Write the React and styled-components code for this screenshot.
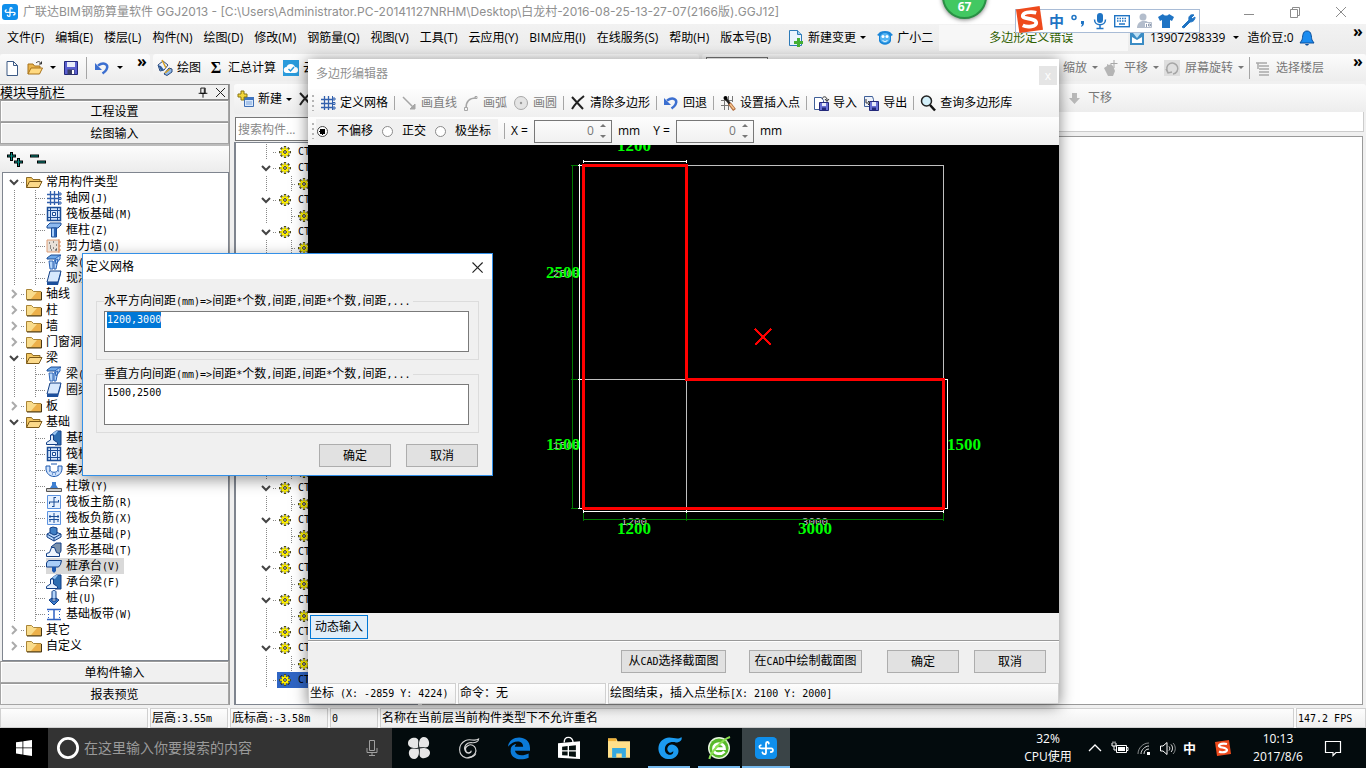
import React, { useEffect, useRef } from 'react'
import styled, { createGlobalStyle, css } from 'styled-components'

const GlobalStyle = createGlobalStyle`
  * {
    box-sizing: border-box;
  }

  body {
    margin: 0;
    overflow: hidden;
    color: #000;
    background: #f0f0f0;
    font: 12px/16px 'Open Sans', 'Noto Sans CJK SC', sans-serif;
  }

  button,
  input,
  select,
  textarea {
    margin: 0;
    padding: 0;
    color: inherit;
    font: inherit;
    border-radius: 0;
  }
`

/* ---------- text ---------- */

const Narrow = styled.span`
  font-family: 'DejaVu Sans Mono', monospace;
  font-size: 10px;
  white-space: pre;
`

// Chinese at 12px, everything else at half that width
function Mixed({ children }) {
  return children
    .split(/([\x20-\x7e]+)/)
    .filter(Boolean)
    .map((part, i) =>
      /^[\x20-\x7e]/.test(part) ? <Narrow key={i}>{part}</Narrow> : part
    )
}

/* ---------- icons ---------- */

const Svg = styled.svg`
  display: block;
  flex: none;
  overflow: visible;
`

const shapes = {
  file: (
    <path d="M3 1.500h6.500l4 4v10h-10.500zM9.500 1.500v4h4" fill="#fff" stroke="#3d5a85" />
  ),
  open: (
    <g>
      <path d="M1 14V4h5l1.500 2H13v3" fill="#e9b44c" stroke="#a8721a" />
      <path d="M1 14l3-6h11.500l-3 6z" fill="#ffd980" stroke="#a8721a" />
      <path d="M9 3c2-2 4-2 5 1M12 4h2.500V1.500" fill="none" stroke="#333" />
    </g>
  ),
  save: (
    <g>
      <path d="M1.500 1.500h13v13h-13z" fill="#5a5fd0" stroke="#23287a" />
      <path d="M4 2h8v5H4z" fill="#e8ecfa" />
      <path d="M4.500 9.500h7v5h-7z" fill="#3a3f66" />
      <path d="M9 10h2v4H9z" fill="#fff" />
    </g>
  ),
  undo: (
    <g fill="none" stroke="#3c6fd0" strokeWidth="2.500">
      <path d="M4 5.500c6-4 11-1 8.500 4-1 2-2.500 3-4 4" />
      <path d="M1 3v7h7z" fill="#3c6fd0" stroke="none" />
    </g>
  ),
  bucket: (
    <g>
      <path d="M1 5l5-4 5 4-4 5-4 1z" fill="#eef3fb" stroke="#2c4a7c" />
      <path d="M1 5l3 6 3-1-3-4z" fill="#2c5d9c" />
      <path d="M7 14l5-6 3 1v3l-5 3.500z" fill="#8fb9ea" stroke="#2c4a7c" />
      <path d="M5 0l4 8M8 13l5-4" stroke="#d6a021" strokeWidth="1.500" />
    </g>
  ),
  cloud: (
    <g>
      <path d="M0 0h16v16H0z" fill="#2a9bdc" />
      <path d="M4 13a3 3 0 0 1-.5-6 4.500 4.500 0 0 1 8.500 0 3 3 0 0 1 0 6z" fill="#fff" />
      <path d="M5.500 9l2 2 3.500-4" fill="none" stroke="#2a9bdc" strokeWidth="1.500" />
    </g>
  ),
  addTable: (
    <g>
      <path d="M6.500 6.500h9v9h-9z" fill="#d8e8fb" stroke="#3f6fb5" />
      <path d="M6 6h10v3H6z" fill="#3f74c0" />
      <path d="M8 11h6M8 13h6" stroke="#7ba1d8" />
      <path d="M3 0h3v3h3v3H6v3H3V6H0V3h3z" fill="#f2d53a" stroke="#8a7610" />
    </g>
  ),
  cross: (
    <path d="M2 2l11 12M14 1C9 5 5 9 2 14" fill="none" stroke="#222" strokeWidth="2" />
  ),
  grid: (
    <g>
      <path d="M4.500 1v14M8.500 1v14M1 4.500h12M1 8.500h12M1 12.500h12" fill="none" stroke="#3260ad" strokeWidth="1.300" />
      <path d="M12.500 1v14" stroke="#3260ad" />
      <path d="M13 3h2v2h-2zM13 7.500h2v2h-2zM13 12h2v2h-2z" fill="#fff" stroke="#3260ad" />
    </g>
  ),
  line: (
    <g fill="none" stroke="#a6a6a6">
      <path d="M2 2l11 11" strokeWidth="1.500" />
      <path d="M14 9v5H9z" fill="#a6a6a6" />
    </g>
  ),
  arc: (
    <g fill="none" stroke="#a6a6a6" strokeWidth="1.500">
      <path d="M3 13C3 6 7 3 13 3" />
      <path d="M1.500 12.500h3v3h-3zM12 1.500h2v2h-2z" strokeWidth="1" />
    </g>
  ),
  circle: (
    <g>
      <circle cx="8" cy="8" r="6.500" fill="#e4e4e4" stroke="#a8a8a8" />
      <circle cx="8" cy="8" r="1.200" fill="#999" />
    </g>
  ),
  wand: (
    <g>
      <path d="M4.500 2v13M8.500 1v14M1 5.500h12M1 10.500h10M12.500 1v6" fill="none" stroke="#777" />
      <path d="M6 4l4 5" stroke="#222" strokeWidth="2.500" />
      <path d="M9.500 8.500l5 6.500" stroke="#b06a3c" strokeWidth="3.500" />
      <path d="M10 9l4 5" stroke="#f4c48c" strokeWidth="1.500" />
      <circle cx="5.500" cy="3" r="2" />
    </g>
  ),
  importFile: (
    <g>
      <path d="M1.500 2.500h7l2 3v9h-9z" fill="#fff" stroke="#3f5f98" />
      <path d="M6.500 7.500h9v8h-9z" fill="#6a72d4" stroke="#23287a" />
      <path d="M9 8h4v3H9z" fill="#e8ecfa" />
      <path d="M9 12.500h4v3H9z" fill="#23287a" />
      <path d="M9 4c1-3 4-3 5 0v2M12 4l2 2.500 2-2.500" fill="none" stroke="#333" />
    </g>
  ),
  exportFile: (
    <g>
      <path d="M1.500 1.500h8l1 3v7h-9z" fill="#eef2fa" stroke="#3f5f98" />
      <path d="M6.500 6.500h9v9h-9z" fill="#6a72d4" stroke="#23287a" />
      <path d="M9 7h4v4H9z" fill="#e8ecfa" />
      <path d="M9 12.500h4v3H9z" fill="#23287a" />
      <path d="M3 4v4h4M5 6l2 2-2 2" fill="none" stroke="#333" />
    </g>
  ),
  search: (
    <g>
      <circle cx="6.500" cy="6" r="5" fill="#d4f0fa" stroke="#222" strokeWidth="1.500" />
      <path d="M10 10l5 5.500" stroke="#111" strokeWidth="2.500" />
    </g>
  ),
  newChange: (
    <g>
      <path d="M1.500.5h8l4 4v11h-12z" fill="#eaf4fd" stroke="#2c7ab8" />
      <path d="M9.500.5v4h4" fill="#9ccbee" stroke="#2c7ab8" />
      <path d="M9 8h3v3h3v3h-3v3H9v-3H6v-3h3z" fill="#45b035" />
    </g>
  ),
  mascot: (
    <g>
      <path d="M0 5l3-3c3-1.500 7-1.500 10 0l3 3-2 1v5c-2 5-10 5-12 0V6z" fill="#1b86d8" />
      <circle cx="8" cy="8" r="5" fill="#55b5f3" />
      <circle cx="6" cy="6.500" r="1.500" fill="#fff" />
      <circle cx="10" cy="6.500" r="1.500" fill="#fff" />
      <path d="M5.500 10c1 2 4 2 5 0" stroke="#fff" fill="none" />
    </g>
  ),
  account: (
    <g>
      <path d="M1 1h14v14H1z" fill="#3b8cc4" />
      <path d="M3 7l5 3 5-3v6H3z" fill="#fff" />
      <path d="M4 3h8l-4 5z" fill="#bfe0f4" />
    </g>
  ),
  bell: (
    <g>
      <path d="M8 1c5 0 4 6 5 9l2 3H1l2-3c1-3 0-9 5-9z" fill="#1b8cf0" stroke="#0b4f9c" />
      <path d="M6 14c1 2 3 2 4 0z" fill="#0b4f9c" />
    </g>
  ),
  hand: (
    <g>
      <path d="M1 8l3-2v-2l2 1 2-1 2 2 2 5-2 5H5z" fill="#b5b5b5" />
      <path d="M11 0v8M7.500 3.500h7" stroke="#a8a8a8" />
    </g>
  ),
  rotate: (
    <g>
      <path d="M0 0h16v16H0z" fill="#dedede" />
      <path d="M4 12a5.500 5.500 0 1 1 5 2M2 9l2 4 4-1" fill="none" stroke="#a6a6a6" strokeWidth="1.500" />
    </g>
  ),
  floors: (
    <path d="M1 3h11M4 6h10M4 9h10M4 12h10M4 15h10M3 3v6" fill="none" stroke="#a9a9a9" strokeWidth="1.500" />
  ),
  down: <path d="M5 3h5v5h3l-5.500 6L2 8h3z" fill="#b9b9b9" />,
  logo: (
    <g>
      <rect width="16" height="16" rx="3" fill="#0f8fec" />
      <path
        d="M8 8V5c0-1.800 2-1.800 2-.2M8 8v3.200c0 1.600-2.300 1.600-2.600 0M8 8.300H4.600c-1.800 0-1.800-2-.4-2.300M8 8.300h3.800c1.700 0 1.700 2.600-.3 2.600"
        fill="none"
        stroke="#fff"
        strokeWidth="1.300"
        strokeLinecap="round"
      />
    </g>
  ),
  pin: (
    <path d="M5.500 3.500h5v6h-5zM3 9.500h10M8 9.500v5M9.500 4v5" fill="none" stroke="#000" />
  ),
  close: <path d="M4 4l9 9M13 4l-9 9" fill="none" stroke="#222" />,
  folder: (
    <g>
      <path d="M.5 13.500V3.500h5l2 2h7.500v8z" fill="#f9dc8c" stroke="#a98538" />
      <path d="M11 6h3.500v7H5z" fill="#ecb04a" />
      <path d="M1 14h14.500V6" fill="none" stroke="#4a3712" />
    </g>
  ),
  folderOpen: (
    <g>
      <path d="M.5 13.500V3.500h5l1.500 2h7v2" fill="#f3c763" stroke="#8d6a25" />
      <path d="M.5 13.500l3-6H16l-3 6z" fill="#fbd98a" stroke="#7a5818" />
    </g>
  ),
  raft: (
    <g fill="none" stroke="#1b4d96">
      <path d="M1.500 1.500h13v13h-13z" fill="#d6e7fc" strokeWidth="1.500" />
      <path d="M4.500 2v12M11.500 2v12M2 4.500h12M2 11.500h12" />
      <path d="M6.500 6.500h3v3h-3z" fill="#fff" />
    </g>
  ),
  column: (
    <g>
      <path d="M1 4l3-3h11v2l-3 3H1z" fill="#8db9ef" stroke="#1b4d96" />
      <path d="M5.500 6h5v9h-5z" fill="#a9cdf7" stroke="#1b4d96" />
      <path d="M8 6h2v9H8z" fill="#2b63b5" />
    </g>
  ),
  wall: (
    <g>
      <path d="M1 2h12v12H1z" fill="#e9e1d9" stroke="#e0a078" />
      <path d="M3 5h1M7 4h1M10 7h1M4 8h1M7 10h1M10 11h1M5 12h1M4 10h1M9 12h2" stroke="#333" />
      <path d="M13 1v14M13 4h2M13 8h2M13 12h2" stroke="#d88a5c" />
    </g>
  ),
  beam: (
    <g>
      <path d="M1 4l4-3h10l-4 4H1z" fill="#6ea8e8" stroke="#1b4d96" />
      <path d="M9 5l5-4v4l-4 5zM3 7h4v8H4zM8 7l4-2-2 10H8z" fill="#b6d6fa" stroke="#2b63b5" />
    </g>
  ),
  slab: (
    <g>
      <path d="M4 1h11l-3 11H1z" fill="#d7e8fd" stroke="#123f85" />
      <path d="M1 12h11l3-11v3l-3 11H1z" fill="#1c4f9c" />
    </g>
  ),
  beamBase: (
    <g>
      <path d="M5 5l5-4h5v14H9z" fill="#2d6db0" stroke="#123f85" />
      <path d="M6 4l4-3h2L9 5z" fill="#9cc8f4" />
      <path d="M.5 14.500v-2l4-2.500V5h3v5l4 2.500v2z" fill="#e3effd" stroke="#123f85" />
    </g>
  ),
  strip: (
    <g>
      <path d="M5 5l5-4h5v8l-3 5z" fill="#7c93ad" stroke="#123f85" />
      <path d="M.5 14.500v-3l3-1 2-5h3l2 5 3 1v3z" fill="#eef5fe" stroke="#123f85" />
    </g>
  ),
  sump: (
    <g>
      <path d="M0 4h4v4c1 3 7 3 8 0V4h4v3c-1 10-15 10-16 0z" fill="#cfe2fb" stroke="#1c58b0" />
      <path d="M3 9h1M6 12h1M9 12h1M12 9h1M5 2h6" stroke="#1c58b0" />
    </g>
  ),
  pier: (
    <g>
      <path d="M.5 10.500h15v3H.5z" fill="#cfcfcf" stroke="#555" />
      <path d="M4 10l2-3V4h4v3l2 3z" fill="#3e7fd0" />
    </g>
  ),
  barMain: (
    <g fill="none" stroke="#1b4d96">
      <path d="M1.500 1.500h13v13h-13z" fill="#e6f1ff" stroke="#5c93e0" />
      <path d="M8 3v10M3 8h10M3.500 8v2M12.500 8V6M8 3.500h2M8 12.500H6" />
    </g>
  ),
  barTop: (
    <g fill="none" stroke="#1b4d96">
      <path d="M1.500 1.500h13v13h-13z" fill="#e6f1ff" stroke="#5c93e0" />
      <path d="M3 6.500h10M3 9.500h10M8 3v10M4 5v3M12 5v3M4 9v3M12 9v3" />
    </g>
  ),
  isolated: (
    <g>
      <path d="M1 8l6-3 8 3v3l-7 4-7-4z" fill="#b6d6fa" stroke="#123f85" />
      <path d="M4 2l3-1 4 1v6L8 9 4 7z" fill="#3f7fc4" stroke="#123f85" />
      <path d="M1 8l7 4 7-4M8 12v3" fill="none" stroke="#123f85" />
    </g>
  ),
  cap: (
    <g>
      <path d="M.5 5l2-2.500h13l-1 4-2 2.500H.5z" fill="#a9cdf7" stroke="#123f85" />
      <path d="M6 9h4v4l-2 2-2-2z" fill="#1c58b0" />
    </g>
  ),
  pile: (
    <g fill="#3e7fd0" stroke="#123f85">
      <path d="M6 2c0-2 4-2 4 0v7H6z" fill="#b6d6fa" />
      <path d="M3 10l3-2v3h4V8l3 2-3 3-2 2-2-2z" />
    </g>
  ),
  band: (
    <g fill="none" stroke="#2f62c4">
      <path d="M1 3.500h14M1 13.500h14M8 4v9" strokeWidth="1.500" />
      <path d="M2.500 5v8M13.500 5v8" strokeDasharray="1 2" />
    </g>
  ),
  gear: (
    <g>
      <path d="M8 0v16M0 8h16M2.500 2.500l11 11M13.500 2.500l-11 11" stroke="#222" strokeWidth="3" />
      <path d="M8 1v14M1 8h14M3.500 3.500l9 9M12.500 3.500l-9 9" stroke="#fff200" strokeWidth="2" />
      <circle cx="8" cy="8" r="4.500" fill="#fff200" />
      <circle cx="8" cy="8" r="1.800" fill="#fff" stroke="#222" strokeWidth="1.300" />
    </g>
  ),
  start: (
    <path d="M0 2.300l6.500-.9v6.100H0zM7.300 1.300L16 0v7.500H7.300zM0 8.300h6.500v6.100L0 13.500zM7.300 8.300H16V16l-8.700-1.300z" fill="#fff" />
  ),
  cortana: <circle cx="8" cy="8" r="7" fill="none" stroke="#fff" strokeWidth="2" />,
  mic: (
    <path d="M5.500.5h5v10h-5zM3 8v4.500h10V8M8 12.500V15.500M5 15.500h6" fill="none" stroke="#a0a0a0" />
  ),
  fan: (
    <g fill="#e6e6e6">
      <path d="M7.600 7.600C5 8.500 0 8 0 4.500 0 1 5-.5 7 1.500c1.200 1.500 0 4 .6 6.100z" />
      <path d="M8.400 7.600C7.500 5 8 0 11.500 0 15 0 16.500 5 14.500 7c-1.500 1.200-4 0-6.100.6z" />
      <path d="M8.400 8.400C11 7.500 16 8 16 11.500 16 15 11 16.500 9 14.500c-1.200-1.500 0-4-.6-6.100z" />
      <path d="M7.600 8.400C8.500 11 8 16 4.500 16 1 16-.5 11 1.500 9c1.500-1.200 4 0 6.100-.6z" />
    </g>
  ),
  swirl: (
    <g fill="none" stroke="#d5d5d5" strokeWidth=".8">
      <path d="M15 1.500c-3 2-6-.5-9.500 1-6 3-5.500 11 0 12.500 5 1 9.500-4 6.500-8-3-3-8 0-6 3.500 1 1.500 3.500 1 3.500-.5 .5 2-3 2.500-4 .5-2-3 .5-6.500 4-6.500 3 .5 5.500-.5 5.500-2.500z" />
      <path d="M13 12c-1 2-3 3-6 3" />
    </g>
  ),
  edge: (
    <path d="M0 7C1-2 16-2 16 8v2H5c1 4 6 4 10 2v3C8 18 1 15 2 9c0-3 3-4 4-4-1 1-1 2-1 2h6C11 2 4 2 0 7z" fill="#0b7ad8" />
  ),
  store: (
    <g>
      <path d="M0 4.500L16 3v13l-16-1z" fill="#fff" />
      <path d="M4.500 4c0-5 6-5 6.500 0" fill="none" stroke="#fff" />
      <path d="M3 7l4-.4v3H3zM8 6.500l5-.5v3.600H8zM3 10.500h4v3l-4-.3zM8 10.500h5v4L8 14z" fill="#05100f" />
    </g>
  ),
  explorer: (
    <g>
      <path d="M0 1h6l1 2h9v12H0z" fill="#ffe08a" />
      <path d="M0 1h6v2H0z" fill="#f0b23a" />
      <path d="M3 8h10v7h-3v-3H6v3H3z" fill="#35a9e0" />
    </g>
  ),
  glodon: (
    <path d="M17 0c-3 3-7-1-12 1-7 3-6 14 2 15 7 1 11-7 5-10-4-2-7 3-4 5 1 1 3 0 3-1 1 4-6 4-6-1 0-5 5-6 8-5 3 0 5-2 4-4z" fill="#1c9bf0" />
  ),
  greenBrowser: (
    <g>
      <circle cx="8" cy="8" r="8" fill="#e9f7e0" />
      <circle cx="8" cy="8" r="7" fill="#57b82c" />
      <path d="M4 8.500h8c0-5-8-5-8 0s6 4 8 2" fill="none" stroke="#fff" strokeWidth="2" />
      <path d="M1 16C2 11 10 2 16 0" fill="none" stroke="#8be052" strokeWidth="1.500" />
    </g>
  ),
  up: <path d="M2 11l6-6 6 6" fill="none" stroke="#fff" strokeWidth="1.300" />,
  battery: (
    <g>
      <path d="M5.500 5.500h10v7h-10zM15.500 7.500h1.500v3h-1.500" fill="none" stroke="#fff" />
      <path d="M7 7h7v4H7z" fill="#fff" />
      <path d="M1 3v3h4V3M3 6v4h2M2 1.500v2M4 1.500v2" fill="none" stroke="#fff" />
    </g>
  ),
  wifi: (
    <g fill="none" stroke="#ddd">
      <path d="M3 14C3 8 8 3 14 3" opacity=".6" />
      <path d="M6 14c0-4 4-8 8-8M9 14c0-3 2-5 5-5" />
      <path d="M12 12h3v3h-3z" fill="#fff" stroke="none" />
    </g>
  ),
  volume: (
    <g fill="none" stroke="#fff">
      <path d="M1.500 6v5h2.500l4 3.500V2.500L4 6z" />
      <path d="M10 6.500c1 1 1 3 0 4M12 4.500c2 2 2 5.500 0 7.500" />
      <path d="M14 3c3 3 3 8 0 11" opacity=".5" />
    </g>
  ),
  message: (
    <path d="M.5 1.500h15v11H11L8 15.500V12.500H.5z" fill="none" stroke="#fff" strokeWidth="1.200" />
  ),
  micBlue: (
    <g>
      <rect x="5" y="0" width="6" height="10" rx="3" fill="#1f74c4" />
      <path d="M2.500 6.500c0 7 11 7 11 0M8 12v3M4.500 15.500h7" fill="none" stroke="#1f74c4" strokeWidth="1.500" />
    </g>
  ),
  keyboard: (
    <g>
      <rect x=".7" y="2.700" width="14.600" height="11" fill="#fff" stroke="#1f74c4" strokeWidth="1.400" />
      <path d="M3 5.500h10M3 8h10" stroke="#1f74c4" strokeWidth="1.500" strokeDasharray="1.500 1" />
      <path d="M5 11h6" stroke="#1f74c4" strokeWidth="1.500" />
    </g>
  ),
  user: (
    <g fill="#b3bdcc">
      <circle cx="7" cy="4" r="3.500" />
      <path d="M1 15c0-9 12-9 12-3v3z" />
      <path d="M8.500 9.500h7v5h-7z" fill="#fff" stroke="#b3bdcc" />
      <path d="M10.500 11v3M12.500 11h2v2h-2z" fill="none" stroke="#8e9bb0" />
    </g>
  ),
  shirt: <path d="M5 1c1 2 5 2 6 0l5 3-2 4-2-1v8H4V7L2 8 0 4z" fill="#1f74c4" />,
  wrench: (
    <path d="M2 14l7-7c-1-4 2-6 5-5l-3 3 1 1 3-2c0 4-3 5-5 5l-6 6z" fill="#1f74c4" stroke="#1f74c4" />
  ),
  comma: (
    <g fill="none" stroke="#1f74c4">
      <circle cx="4" cy="4.500" r="2" strokeWidth="1.500" />
      <path d="M11 8h3v2c0 2-1 3-3 4l1-3h-1z" fill="#1f74c4" stroke="none" />
    </g>
  ),
  sogou: (
    <g>
      <path d="M0 2l14-2 2 14-14 2z" fill="#ee4a1c" />
      <path d="M12 4C8 3 4 4 4 6s8 1 8 4c0 2-5 3-8 1.500" fill="none" stroke="#fff" strokeWidth="2.200" />
    </g>
  ),
  minimize: <path d="M3 10.500h10" stroke="#8c8c8c" />,
  restore: (
    <path d="M3.500 5.500h7v8h-7zM5.500 5.500v-2h7v8h-2" fill="none" stroke="#8c8c8c" />
  ),
  closeWindow: <path d="M3 3l10 10M13 3L3 13" stroke="#8c8c8c" />,
}

function Icon({ name, size = 16 }) {
  return (
    <Svg width={size} height={size} viewBox="0 0 16 16" aria-hidden="true">
      {shapes[name]}
    </Svg>
  )
}

const Caret = styled.span`
  flex: none;
  border: 3px solid transparent;
  border-top-color: ${(props) => (props.$dim ? '#777' : '#000')};
  border-bottom-width: 0;
`

const Overflow = styled.button`
  align-self: flex-start;
  width: 12px;
  margin-left: auto;
  border: 0;
  background: none;
  color: #000;
  font-size: 16px;
  font-weight: 700;
  line-height: 14px;
`

/* ---------- main window ---------- */

const Screen = styled.div`
  position: relative;
  display: flex;
  flex-direction: column;
  height: 100vh;
  overflow: hidden;
`

const TitleBar = styled.header`
  display: flex;
  align-items: center;
  height: 24px;
  padding: 0 17px 0 2px;
  gap: 5px;
  background: #fff;
  color: #8f8f8f;
  font-family: Inter, 'Noto Sans CJK SC', sans-serif;
  white-space: nowrap;
`

const WindowButtons = styled.div`
  display: flex;
  gap: 30px;
  margin-left: auto;
`

const PlainButton = styled.button`
  display: flex;
  align-items: center;
  justify-content: center;
  border: 0;
  background: none;
`

const MenuBar = styled.nav`
  display: flex;
  align-items: center;
  height: 30px;
  padding: 0 0 3px 2px;
  background: linear-gradient(#f2f2f2, #ebebeb);
  white-space: nowrap;
`

const Menus = styled.div`
  display: flex;
  margin-right: 6px;
`

const MenuItem = styled.button`
  display: flex;
  align-items: center;
  gap: 4px;
  padding: 0 6px 0 5px;
  border: 0;
  background: none;
`

const Notice = styled.div`
  flex: 1;
  display: flex;
  align-items: center;
  height: 26px;
  padding-left: 50px;
  background: #f7f7f7;
  color: #2f6000;
`

const Account = styled.div`
  display: flex;
  align-items: center;
  align-self: stretch;
  gap: 4px;
  width: 238px;
  padding-right: 2px;

  ${Caret} {
    margin: 0 4px;
  }

  svg {
    margin: 0 1px;
  }
`

const ToolRow = styled.div`
  display: flex;
  height: 30px;
  gap: 3px;
  white-space: nowrap;
`

const ToolGroup = styled.div`
  display: flex;
  align-items: center;
  flex: ${(props) => (props.$width ? `0 0 ${props.$width}px` : 1)};
  height: 27px;
  padding: 0 2px 0 4px;
  gap: ${(props) => props.$gap || 8}px;
  border-radius: 3px;
  background: linear-gradient(#fcfcfc, #ededed);
  color: ${(props) => (props.$dim ? '#777' : '#000')};
`

const Tool = styled.button`
  display: flex;
  align-items: center;
  gap: 4px;
  border: 0;
  background: none;
  white-space: nowrap;

  &:disabled {
    color: #7d7d7d;
  }
`

const Sigma = styled.b`
  width: 16px;
  font: 700 16px/16px 'Liberation Serif', serif;
`

const Separator = styled.span`
  flex: none;
  width: 1px;
  height: ${(props) => props.$height || 22}px;
  background: #a5a5a5;
`

const FloorSelect = styled.select`
  align-self: flex-start;
  width: 62px;
  height: 22px;
  margin-top: 3px;
  border: 1px solid #777;
  background: #fff;
`

const RightTools = styled.div`
  display: flex;
  align-items: center;
  align-self: stretch;
  gap: 5px;
  margin-left: auto;
  padding-right: ${(props) => props.$inset || 0}px;

  ${Overflow} {
    margin-left: 23px;
  }
`

const Work = styled.main`
  flex: 1;
  display: flex;
  min-height: 0;
  gap: 4px;
  padding-bottom: 3px;
`

const Sidebar = styled.aside`
  display: flex;
  flex-direction: column;
  width: 230px;
  border-right: 1px solid #999;
`

const PanelHead = styled.div`
  display: flex;
  align-items: center;
  height: 16px;
  gap: 2px;
  border: 1px solid #888;
  border-left: 0;
  font-size: 13px;

  span {
    flex: 1;
  }
`

const SectionButton = styled.button`
  height: 22px;
  padding-top: 2px;
  border: 1px solid #a5a5a5;
  border-top-color: #999;
  background: #f0f0f0;
  box-shadow: inset 1px 1px #fff;
`

const TreeTools = styled.div`
  display: flex;
  align-items: center;
  height: 28px;
  padding-left: 7px;
  border-top: 2px solid #bbb;
  background: linear-gradient(#fcfcfc, #ececec);
`

const Tree = styled.ul`
  flex: 1;
  min-height: 0;
  margin: 0;
  padding: ${(props) => (props.$narrow ? '1px 0 0 23px' : '1px 0 0 4px')};
  overflow: hidden;
  border: 1px solid #7f858f;
  border-width: ${(props) => (props.$narrow ? '1px 1px 1px 2px' : '1px')};
  background: #fff;
  list-style: none;
  margin-left: ${(props) => (props.$narrow ? 0 : '2px')};
`

const dotsDown = css`
  background-image: repeating-linear-gradient(#888 0 1px, transparent 1px 2px);
  background-size: 1px 100%;
  background-repeat: no-repeat;
`

const dotsAcross = css`
  content: '';
  height: 1px;
  background: repeating-linear-gradient(90deg, #888 0 1px, transparent 1px 2px);
`

const TreeRow = styled.li`
  display: flex;
  align-items: center;
  height: 16px;
  white-space: nowrap;

  &::before {
    ${dotsAcross}
    order: 1;
    width: ${(props) => (props.$depth ? 10 : 4)}px;
  }
`

const Stem = styled.span`
  flex: none;
  width: ${(props) => props.$width}px;
  height: 16px;
  ${(props) => props.$line && dotsDown}
  background-position: 7px 0;
`

const Toggle = styled.button`
  flex: none;
  display: flex;
  width: 14px;
  padding: 0 1px;
  border: 0;
  background: none;
`

const TreeLabel = styled.span`
  order: 2;
  display: flex;
  align-items: center;
  gap: 4px;
  height: 16px;
  padding-right: 4px;
  padding-left: ${(props) => props.$inset || 0}px;
  background: ${(props) => props.$background || 'none'};

  svg {
    margin-right: ${(props) => props.$iconGap || 0}px;
  }
`

function Chevron({ open }) {
  return (
    <Svg width="12" height="12" viewBox="0 0 12 12" fill="none" strokeWidth="2">
      <path
        d={open ? 'M2 4l4 4 4-4' : 'M4 2l4 4-4 4'}
        stroke={open ? '#444' : '#aaa'}
      />
    </Svg>
  )
}

const modules = [
  ['folderOpen', '常用构件类型', 0, true],
  ['grid', '轴网(J)', 1],
  ['raft', '筏板基础(M)', 1],
  ['column', '框柱(Z)', 1],
  ['wall', '剪力墙(Q)', 1],
  ['beam', '梁(L)', 1],
  ['slab', '现浇板(B)', 1],
  ['folder', '轴线', 0],
  ['folder', '柱', 0],
  ['folder', '墙', 0],
  ['folder', '门窗洞', 0],
  ['folderOpen', '梁', 0, true],
  ['beam', '梁(L)', 1],
  ['slab', '圈梁(E)', 1],
  ['folder', '板', 0],
  ['folderOpen', '基础', 0, true],
  ['beamBase', '基础梁(F)', 1],
  ['raft', '筏板基础(M)', 1],
  ['sump', '集水坑(K)', 1],
  ['pier', '柱墩(Y)', 1],
  ['barMain', '筏板主筋(R)', 1],
  ['barTop', '筏板负筋(X)', 1],
  ['isolated', '独立基础(P)', 1],
  ['strip', '条形基础(T)', 1],
  ['cap', '桩承台(V)', 1],
  ['beamBase', '承台梁(F)', 1],
  ['pile', '桩(U)', 1],
  ['band', '基础板带(W)', 1],
  ['folder', '其它', 0],
  ['folder', '自定义', 0],
]

function ModuleTree() {
  return (
    <Tree>
      {modules.map(([icon, label, depth, open], i) => (
        <TreeRow key={i} $depth={depth}>
          {depth ? (
            <>
              <Stem $width={21} $line />
              <Stem $width={8} $line />
            </>
          ) : (
            <Toggle aria-label={label}>
              <Chevron open={open} />
            </Toggle>
          )}
          <TreeLabel
            $inset={depth ? 0 : 1}
            $background={label === '桩承台(V)' && '#d9d9d9'}
          >
            <Icon name={icon} />
            <span>
              <Mixed>{label}</Mixed>
            </span>
          </TreeLabel>
        </TreeRow>
      ))}
    </Tree>
  )
}

// p: parent with one child, l: single item
const componentRows = 'lpppppppppppplpplpl'.split('').flatMap((kind, i, all) => {
  const last = i === all.length - 1
  return kind === 'p'
    ? [{ open: true }, { child: true }]
    : [{ selected: last }]
})

const Column = styled.section`
  display: flex;
  flex-direction: column;
  width: ${(props) => (props.$width ? `${props.$width}px` : 'auto')};
  flex: ${(props) => (props.$width ? 'none' : 1)};
  min-width: 0;
`

const SearchBox = styled.input`
  height: 24px;
  margin: 3px 0 1px 1px;
  padding: 0 2px;
  border: 1px solid #777;
  background: #fff;

  &::placeholder {
    color: #888;
  }
`

const DrawingArea = styled.div`
  flex: 1;
  margin: 4px 3px 0 0;
  border: 1px solid #999;
  background: #fff;
`

const TabStrip = styled.div`
  height: 20px;
  margin-right: 2px;
  border: 1px solid #ccc;
  border-top: 0;
  background: #fff;
`

const StatusBar = styled.footer`
  display: flex;
  gap: 2px;
  height: 20px;
  background: #fbfbfb;
`

const StatusCell = styled.div`
  flex: ${(props) => (props.$width ? `0 0 ${props.$width}px` : 1)};
  padding: 0 1px;
  border: 1px solid #d0d0d0;
  background: linear-gradient(#fdfdfd, #efefef);
  line-height: 18px;
  white-space: nowrap;
`

/* ---------- taskbar ---------- */

const Taskbar = styled.footer`
  display: flex;
  height: 40px;
  background: #030b0d;
  color: #fff;
`

const TaskButton = styled.button`
  display: flex;
  align-items: center;
  justify-content: center;
  width: 48px;
  border: 0;
  border-bottom: 2px solid ${(props) => (props.$running ? '#76b9ed' : 'transparent')};
  border-top: 2px solid transparent;
  background: ${(props) => props.$background || 'none'};
`

const TaskSearch = styled.label`
  display: flex;
  align-items: center;
  gap: 5px;
  width: 344px;
  padding: 0 12px 0 9px;
  background: #333;

  input {
    flex: 1;
    min-width: 0;
    border: 0;
    outline: 0;
    background: none;
    font-size: 14px;
    line-height: 20px;
  }

  input::placeholder {
    color: #9a9a9a;
  }
`

const Tasks = styled.div`
  display: flex;
  gap: 8px;
  padding-left: 6px;

  ${TaskButton} {
    width: 42px;
  }

  ${TaskButton}:last-child {
    width: 48px;
    margin-left: -6px;
  }
`

const Tray = styled.div`
  display: flex;
  align-items: center;
  gap: 8px;
  margin-left: auto;
  padding-right: 25px;

  b {
    width: 16px;
    margin-right: 8px;
    font-size: 13px;
  }
`

const TrayText = styled.div`
  width: ${(props) => props.$width}px;
  line-height: 18px;
  text-align: center;
`

/* ---------- polygon editor ---------- */

const Editor = styled.section`
  position: absolute;
  top: 59px;
  right: 307px;
  bottom: 64px;
  left: 308px;
  display: flex;
  flex-direction: column;
  background: #f0f0f0;
  box-shadow: 0 2px 14px rgba(0, 0, 0, 0.5);
  white-space: nowrap;
`

const EditorTitle = styled.div`
  display: flex;
  align-items: center;
  justify-content: space-between;
  height: 30px;
  padding: 0 2px 0 8px;
  background: #fff;
  color: #909090;

  button {
    width: 18px;
    height: 19px;
    margin-top: 3px;
    background: #e5e5e5;
    color: #fff;
  }
`

const EditorTools = styled.div`
  display: flex;
  align-items: center;
  height: ${(props) => props.$height}px;
  padding-left: 4px;
  gap: 6px;
  background: linear-gradient(#fdfdfd, #efefef);
`

const Grip = styled.span`
  width: 2px;
  height: 16px;
  background: repeating-linear-gradient(#b5b5b5 0 2px, transparent 2px 5px);
`

const Modes = styled.div`
  display: flex;
  align-items: center;
  height: 24px;
  margin-left: -4px;
  padding-left: 1px;
  padding-right: 7px;
  gap: 9px;
  background: #f0f0f0;

  label {
    display: flex;
    align-items: center;
    gap: 9px;
  }
`

const Radio = styled.input.attrs({ type: 'radio', name: 'offset' })`
  appearance: none;
  width: 11px;
  height: 11px;
  border: 1px solid #8a8a8a;
  border-radius: 50%;
  background: #fff;

  &:checked {
    border-color: #444;
    background: radial-gradient(#000 0 3px, #fff 3px);
  }
`

const Spinner = styled.span`
  display: flex;
  width: 78px;
  height: 23px;
  border: 1px solid #777;
  color: #777;

  input {
    flex: 1;
    min-width: 0;
    border: 0;
    background: none;
    text-align: right;
  }
`

const Steps = styled.span`
  display: flex;
  flex-direction: column;
  justify-content: space-around;
  width: 17px;
  padding-left: 6px;

  button {
    display: flex;
    padding: 2px 0;
    border: 0;
    background: none;
  }

  button:first-child ${Caret} {
    transform: rotate(180deg);
  }
`

const Unit = styled.span`
  margin-right: 7px;
`

const Canvas = styled.svg`
  flex: 1;
  display: block;
  width: 100%;
  min-height: 0;
  background: #000;
  shape-rendering: crispEdges;
`

const DimText = styled.text`
  fill: ${(props) => (props.$faint ? '#c0c0c0' : '#00ff00')};
  font: ${(props) =>
    props.$faint
      ? "11px 'Liberation Mono', monospace"
      : "bold 17px 'Liberation Serif', serif"};
  text-anchor: middle;
`

const InputBar = styled.div`
  height: 28px;
  padding: 2px;
  border-bottom: 1px solid #999;
`

const ActiveButton = styled.button`
  width: 58px;
  height: 24px;
  border: 1px solid #0078d7;
  background: #e1eef9;
`

const PushButton = styled.button`
  width: ${(props) => props.$width || 72}px;
  height: 23px;
  border: 1px solid #adadad;
  background: #e1e1e1;
`

const EditorActions = styled.div`
  display: flex;
  align-items: flex-start;
  justify-content: flex-end;
  height: 42px;
  padding: 8px 13px 0 0;
  border-top: 1px solid #fff;

  button:nth-child(2) {
    margin: 0 25px 0 23px;
  }

  button:nth-child(3) {
    margin-right: 15px;
  }
`

const EditorStatus = styled(StatusBar)`
  height: 21px;
`

function NumberBox({ id }) {
  return (
    <Spinner>
      <input id={id} defaultValue="0" />
      <Steps>
        <button aria-label="+">
          <Caret $dim />
        </button>
        <button aria-label="-">
          <Caret $dim />
        </button>
      </Steps>
    </Spinner>
  )
}

function Drawing() {
  return (
    <Canvas>
      <path
        d="M275.500 20.500h360v214M275.500 234.500h103M378.500 234.500v129"
        fill="none"
        stroke="#c0c0c0"
      />
      <DimText $faint x="258" y="132">2500</DimText>
      <DimText $faint x="258" y="304">1500</DimText>
      <DimText $faint x="326" y="380">1200</DimText>
      <DimText $faint x="507" y="380">3000</DimText>
      <path
        d="M264.500 20v344M263 20.500h12M263 234.500h12M263 363.500h12M275 374.500h361M275.500 364v12M378.500 364v12M635.500 364v12"
        fill="none"
        stroke="#007a00"
      />
      <path
        d="M271.500 19v345M270 20.500h5M270 234.500h5M270 363.500h5M275 16.500h104M275.500 15v3M378.500 15v3M275 366.500h361M275.500 365v3M378.500 365v3M635.500 365v3M639.500 234v129M635 234.500h5M635 363.500h5"
        fill="none"
        stroke="#fff"
      />
      <path
        d="M275.500 20.500h103v214h257v129h-360z"
        fill="none"
        stroke="#f00"
        strokeWidth="3"
      />
      <path d="M447 184l16 16M463 184l-16 16" stroke="#f00" strokeWidth="2.500" />
      <DimText x="326" y="6">1200</DimText>
      <DimText x="255" y="133">2500</DimText>
      <DimText x="255" y="305">1500</DimText>
      <DimText x="656" y="305">1500</DimText>
      <DimText x="326" y="389">1200</DimText>
      <DimText x="507" y="389">3000</DimText>
    </Canvas>
  )
}

function PolygonEditor() {
  return (
    <Editor>
      <EditorTitle>
        多边形编辑器
        <PlainButton>x</PlainButton>
      </EditorTitle>
      <EditorTools $height={28}>
        <Grip />
        <Tool><Icon name="grid" />定义网格</Tool>
        <Separator $height={14} />
        <Tool disabled><Icon name="line" />画直线</Tool>
        <Tool disabled><Icon name="arc" />画弧</Tool>
        <Tool disabled><Icon name="circle" />画圆</Tool>
        <Separator $height={14} />
        <Tool><Icon name="cross" />清除多边形</Tool>
        <Separator $height={14} />
        <Tool><Icon name="undo" />回退</Tool>
        <Separator $height={14} />
        <Tool><Icon name="wand" />设置插入点</Tool>
        <Separator $height={14} />
        <Tool><Icon name="importFile" />导入</Tool>
        <Tool><Icon name="exportFile" />导出</Tool>
        <Separator $height={14} />
        <Tool><Icon name="search" />查询多边形库</Tool>
      </EditorTools>
      <EditorTools $height={28}>
        <Grip />
        <Modes>
          <label><Radio defaultChecked />不偏移</label>
          <label><Radio />正交</label>
          <label><Radio />极坐标</label>
        </Modes>
        <Separator $height={16} />
        <label htmlFor="offset-x">X =</label>
        <NumberBox id="offset-x" />
        <Unit>mm</Unit>
        <label htmlFor="offset-y">Y =</label>
        <NumberBox id="offset-y" />
        <Unit>mm</Unit>
      </EditorTools>
      <Drawing />
      <InputBar>
        <ActiveButton>动态输入</ActiveButton>
      </InputBar>
      <EditorActions>
        <PushButton $width={105}><Mixed>从CAD选择截面图</Mixed></PushButton>
        <PushButton $width={113}><Mixed>在CAD中绘制截面图</Mixed></PushButton>
        <PushButton>确定</PushButton>
        <PushButton>取消</PushButton>
      </EditorActions>
      <EditorStatus>
        <StatusCell $width={148}><Mixed>坐标 (X: -2859 Y: 4224)</Mixed></StatusCell>
        <StatusCell $width={148}>命令：无</StatusCell>
        <StatusCell><Mixed>绘图结束，插入点坐标[X: 2100 Y: 2000]</Mixed></StatusCell>
      </EditorStatus>
    </Editor>
  )
}

/* ---------- grid dialog ---------- */

const Dialog = styled.form`
  position: absolute;
  top: 253px;
  left: 82px;
  width: 411px;
  border: 1px solid #3390e8;
  background: #f0f0f0;
  box-shadow: 0 4px 14px rgba(0, 0, 0, 0.4);
`

const DialogTitle = styled.div`
  display: flex;
  align-items: center;
  justify-content: space-between;
  height: 25px;
  padding: 0 6px 0 3px;
  background: #fff;
`

const DialogBody = styled.div`
  display: flex;
  flex-direction: column;
  gap: 6px;
  padding: 14px 13px 8px;
`

const Group = styled.fieldset`
  min-width: 0;
  margin: 0;
  padding: 1px 9px 7px 7px;
  border: 1px solid #dcdcdc;

  legend {
    padding: 0 3px 0 0;
  }

  textarea {
    display: block;
    width: 100%;
    height: 41px;
    padding: 0 2px;
    border: 1px solid #7a7a7a;
    outline: 0;
    background: #fff;
    font: 10px/16px 'DejaVu Sans Mono', monospace;
    resize: none;
  }

  textarea::selection {
    background: #0078d7;
    color: #fff;
  }
`

const DialogActions = styled.div`
  display: flex;
  justify-content: flex-end;
  gap: 15px;
  padding-top: 5px;
  padding-right: 1px;
`

function GridDialog() {
  const first = useRef(null)

  useEffect(() => {
    first.current.focus()
    first.current.select()
  }, [])

  return (
    <Dialog onSubmit={(e) => e.preventDefault()}>
      <DialogTitle>
        定义网格
        <PlainButton type="button" aria-label="关闭">
          <Icon name="close" size={18} />
        </PlainButton>
      </DialogTitle>
      <DialogBody>
        <Group>
          <legend>
            <label htmlFor="spacing-x">
              <Mixed>水平方向间距(mm)=&gt;间距*个数,间距,间距*个数,间距,...</Mixed>
            </label>
          </legend>
          <textarea id="spacing-x" ref={first} defaultValue="1200,3000" spellCheck="false" />
        </Group>
        <Group>
          <legend>
            <label htmlFor="spacing-y">
              <Mixed>垂直方向间距(mm)=&gt;间距*个数,间距,间距*个数,间距,...</Mixed>
            </label>
          </legend>
          <textarea id="spacing-y" defaultValue="1500,2500" spellCheck="false" />
        </Group>
        <DialogActions>
          <PushButton>确定</PushButton>
          <PushButton type="button">取消</PushButton>
        </DialogActions>
      </DialogBody>
    </Dialog>
  )
}

/* ---------- floating widgets ---------- */

const Ball = styled.div`
  position: absolute;
  top: -26px;
  left: 942px;
  width: 45px;
  height: 45px;
  padding-top: 23px;
  border: 2px solid #2a8f45;
  border-radius: 50%;
  background: #42c862;
  box-shadow: 0 1px 4px rgba(0, 0, 0, 0.5);
  color: #fff;
  font-weight: 700;
  text-align: center;
`

const ImeBar = styled.div`
  position: absolute;
  top: 9px;
  right: 166px;
  display: flex;
  align-items: center;
  gap: 6px;
  height: 24px;
  padding: 0 3px 0 33px;
  border: 1px solid #a9bcd6;
  background: #fff;
  color: #1f74c4;
  font-size: 15px;
  font-weight: 700;

  & > svg:first-child {
    position: absolute;
    left: 0;
    top: -4px;
  }
`

const menus = [
  '文件(F)', '编辑(E)', '楼层(L)', '构件(N)', '绘图(D)', '修改(M)', '钢筋量(Q)',
  '视图(V)', '工具(T)', '云应用(Y)', 'BIM应用(I)', '在线服务(S)', '帮助(H)', '版本号(B)',
]

const tasks = ['fan', 'swirl', 'edge', 'store', 'explorer', 'glodon', 'greenBrowser', 'logo']

export default function App() {
  return (
    <Screen>
      <GlobalStyle />
      <TitleBar>
        <Icon name="logo" />
        广联达BIM钢筋算量软件 GGJ2013 - [C:\Users\Administrator.PC-20141127NRHM\Desktop\白龙村-2016-08-25-13-27-07(2166版).GGJ12]
        <WindowButtons>
          <PlainButton aria-label="最小化"><Icon name="minimize" /></PlainButton>
          <PlainButton aria-label="还原"><Icon name="restore" /></PlainButton>
          <PlainButton aria-label="关闭"><Icon name="closeWindow" /></PlainButton>
        </WindowButtons>
      </TitleBar>
      <MenuBar>
        <Menus>
          {menus.map((label) => (
            <MenuItem key={label}>{label}</MenuItem>
          ))}
        </Menus>
        <MenuItem><Icon name="newChange" />新建变更<Caret /></MenuItem>
        <MenuItem><Icon name="mascot" />广小二</MenuItem>
        <Notice>多边形定义错误</Notice>
        <Account>
          <Icon name="account" />
          13907298339
          <Caret />
          造价豆:0
          <Icon name="bell" />
          <Overflow>»</Overflow>
        </Account>
      </MenuBar>
      <ToolRow>
        <ToolGroup $width={150} $gap={7}>
          <PlainButton aria-label="新建"><Icon name="file" /></PlainButton>
          <PlainButton aria-label="打开"><Icon name="open" /></PlainButton>
          <Caret />
          <PlainButton aria-label="保存"><Icon name="save" /></PlainButton>
          <Separator />
          <PlainButton aria-label="撤销"><Icon name="undo" /></PlainButton>
          <Caret />
          <Overflow>»</Overflow>
        </ToolGroup>
        <ToolGroup $width={546} $gap={7}>
          <Tool><Icon name="bucket" />绘图</Tool>
          <Tool><Sigma>Σ</Sigma>汇总计算</Tool>
          <Tool><Icon name="cloud" />云检查</Tool>
        </ToolGroup>
        <ToolGroup $dim>
          <FloorSelect aria-label="楼层" />
          <RightTools>
            缩放<Caret $dim />
            <Icon name="hand" />平移<Caret $dim />
            <Icon name="rotate" />屏幕旋转<Caret $dim />
            <Separator />
            <Icon name="floors" />选择楼层
            <Overflow>»</Overflow>
          </RightTools>
        </ToolGroup>
      </ToolRow>
      <Work>
        <Sidebar>
          <PanelHead>
            <span>模块导航栏</span>
            <Icon name="pin" size={14} />
            <Icon name="close" size={16} />
          </PanelHead>
          <SectionButton>工程设置</SectionButton>
          <SectionButton>绘图输入</SectionButton>
          <TreeTools>
            <Svg width="40" height="16" viewBox="0 0 40 16" fill="none">
              <path d="M0 5h9M4.500 1v9M7 11h9M11.500 7v9M23 5h9M30 11h9" stroke="#000" strokeWidth="3" />
              <path d="M1 5h7M4.500 2v7M8 11h7M11.500 8v7M24 5h7M31 11h7" stroke="#0a8f86" />
            </Svg>
          </TreeTools>
          <ModuleTree />
          <SectionButton>单构件输入</SectionButton>
          <SectionButton>报表预览</SectionButton>
        </Sidebar>
        <Column $width={184}>
          <ToolGroup $width={30} $gap={6}>
            <Tool><Icon name="addTable" />新建<Caret /></Tool>
            <Icon name="cross" />
          </ToolGroup>
          <SearchBox aria-label="搜索构件" placeholder="搜索构件..." />
          <Tree $narrow>
            {componentRows.map((row, i) => (
              <TreeRow key={i}>
                {row.child && <Stem $width={25} $line />}
                {row.child && <Stem $width={8} $line />}
                {row.open && (
                  <Toggle aria-label="CT">
                    <Chevron open />
                  </Toggle>
                )}
                {!row.child && !row.open && <Stem $width={14} $line />}
                <TreeLabel $inset={2} $iconGap={3} $background={row.selected && '#2f65c4'}>
                  <Icon name="gear" size={12} />
                  {!row.child && <Narrow>CT</Narrow>}
                </TreeLabel>
              </TreeRow>
            ))}
          </Tree>
        </Column>
        <Column>
          <ToolGroup $width={28} $dim>
            <RightTools $inset={252}>
              <Icon name="down" />下移
            </RightTools>
          </ToolGroup>
          <TabStrip />
          <DrawingArea />
        </Column>
      </Work>
      <StatusBar>
        <StatusCell $width={148} />
        <StatusCell $width={78}><Mixed>层高:3.55m</Mixed></StatusCell>
        <StatusCell $width={98}><Mixed>底标高:-3.58m</Mixed></StatusCell>
        <StatusCell $width={48}><Narrow>0</Narrow></StatusCell>
        <StatusCell>名称在当前层当前构件类型下不允许重名</StatusCell>
        <StatusCell $width={70}><Narrow>147.2 FPS</Narrow></StatusCell>
      </StatusBar>
      <Taskbar>
        <TaskButton $background="#000" aria-label="开始"><Icon name="start" /></TaskButton>
        <TaskSearch>
          <Icon name="cortana" size={22} />
          <input placeholder="在这里输入你要搜索的内容" />
          <Icon name="mic" />
        </TaskSearch>
        <Tasks>
          {tasks.map((name, i) => (
            <TaskButton
              key={name}
              aria-label={name}
              $running={i > 4}
              $background={name === 'logo' && '#3a4447'}
            >
              <Icon name={name} size={22} />
            </TaskButton>
          ))}
        </Tasks>
        <Tray>
          <TrayText $width={62}>32%<br />CPU使用</TrayText>
          <Icon name="up" />
          <Icon name="battery" />
          <Icon name="wifi" />
          <Icon name="volume" />
          <b>中</b>
          <Icon name="sogou" />
          <TrayText $width={78}>10:13<br />2017/8/6</TrayText>
          <Icon name="message" />
        </Tray>
      </Taskbar>
      <PolygonEditor />
      <GridDialog />
      <Ball>67</Ball>
      <ImeBar>
        <Icon name="sogou" size={27} />
        中
        <Icon name="comma" />
        <Icon name="micBlue" />
        <Icon name="keyboard" />
        <Icon name="user" />
        <Icon name="shirt" />
        <Icon name="wrench" />
      </ImeBar>
    </Screen>
  )
}
